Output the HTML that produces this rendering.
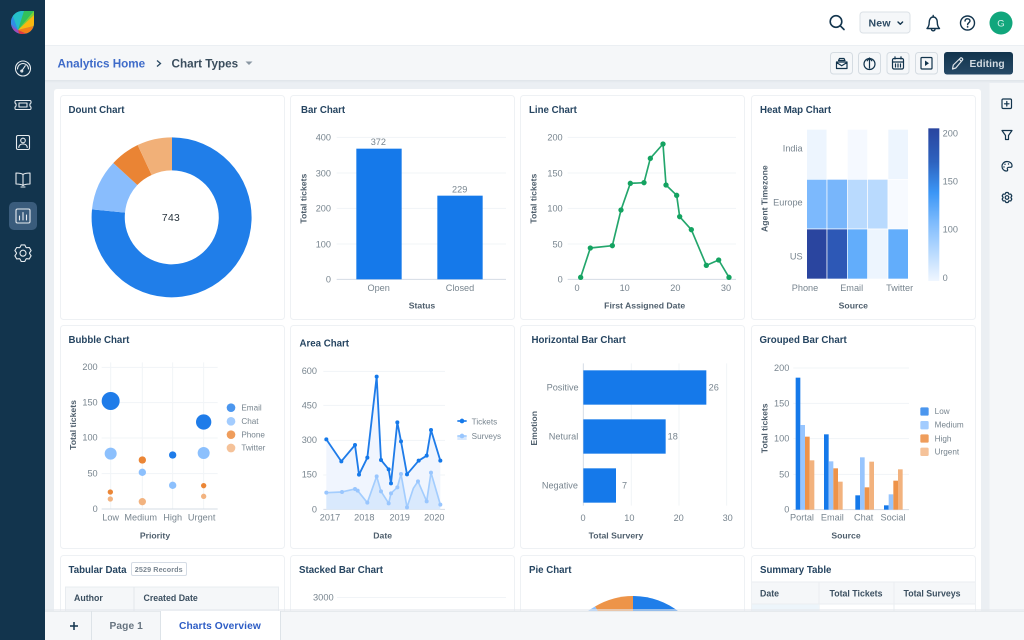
<!DOCTYPE html>
<html><head><meta charset="utf-8"><title>Analytics</title>
<style>
html,body{margin:0;padding:0;width:1024px;height:640px;overflow:hidden;background:#fff}
svg{display:block;filter:blur(.3px)}
text{font-family:"Liberation Sans",sans-serif}
.h{font-size:9.700px;font-weight:700;fill:#264561}
.t{font-size:27.500px;fill:#78858f}
.c{font-size:24.500px}
.l{font-size:26px;font-weight:700;fill:#4f5f6d}
.m{text-anchor:middle}.e{text-anchor:end}
.g{stroke:#f1f4f7;stroke-width:3;fill:none}
.a{stroke:#d5dce5;stroke-width:3;fill:none}
.w{fill:none;stroke:#e6ebef;stroke-width:1.1;stroke-linecap:round;stroke-linejoin:round}
.k{fill:none;stroke:#12344d;stroke-width:1.4;stroke-linecap:round;stroke-linejoin:round}
</style></head><body>
<svg width="1024" height="640" viewBox="0 0 1024 640" xmlns="http://www.w3.org/2000/svg">
<defs>
<path id="gear" d="M-1.77-8.3 1.77-8.3 3.05-5.74 3.44-5.51 6.32-5.69 8.08-2.63 6.5-.23 6.5.23 8.08 2.63 6.32 5.69 3.44 5.51 3.05 5.74 1.77 8.3-1.77 8.3-3.05 5.74-3.44 5.51-6.32 5.69-8.08 2.63-6.5.23-6.5-.23-8.08-2.63-6.32-5.69-3.44-5.51-3.05-5.74Z"/>
<clipPath id="leaf"><path d="M22.5 11H34V23C34 29.5 29 34 22.5 34C16 34 11 29 11 22.5C11 16 16 11 22.5 11Z"/></clipPath>
<linearGradient id="cb" x1="0" y1="0" x2="0" y2="1"><stop offset="0" stop-color="#2a459f"/><stop offset=".22" stop-color="#2e63bf"/><stop offset=".42" stop-color="#3b96f6"/><stop offset=".62" stop-color="#7fbcfd"/><stop offset="1" stop-color="#f0f7ff"/></linearGradient>
<linearGradient id="ed" x1="0" y1="0" x2="0" y2="1"><stop offset="0" stop-color="#12344d"/><stop offset="1" stop-color="#264966"/></linearGradient>
<linearGradient id="sh" x1="0" y1="0" x2="0" y2="1"><stop offset="0" stop-color="#dfe4e9"/><stop offset="1" stop-color="#ebeff3"/></linearGradient>
</defs>

<!-- backgrounds -->
<rect width="1024" height="640" fill="#ebeff3"/>
<rect x="45" y="0" width="979" height="45" fill="#fff"/>
<rect x="54" y="89" width="927" height="530" rx="3" fill="#fff"/>
<rect x="989.500" y="81" width="35" height="530" fill="#f5f7f9"/>
<rect x="45" y="45" width="979" height="35" fill="#f5f7f9"/>
<rect x="45" y="45" width="979" height="1" fill="#ebeff3"/>
<rect x="45" y="80" width="979" height="3" fill="url(#sh)"/>

<!-- cards -->
<g fill="#fff" stroke="#eef1f4">
<rect x="60.500" y="95.500" width="224" height="224" rx="3"/>
<rect x="290.500" y="95.500" width="224" height="224" rx="3"/>
<rect x="520.500" y="95.500" width="224" height="224" rx="3"/>
<rect x="751.500" y="95.500" width="224" height="224" rx="3"/>
<rect x="60.500" y="325.500" width="224" height="223" rx="3"/>
<rect x="290.500" y="325.500" width="224" height="223" rx="3"/>
<rect x="520.500" y="325.500" width="224" height="223" rx="3"/>
<rect x="751.500" y="325.500" width="224" height="223" rx="3"/>
<rect x="60.500" y="555.500" width="224" height="100" rx="3"/>
<rect x="290.500" y="555.500" width="224" height="100" rx="3"/>
<rect x="520.500" y="555.500" width="224" height="100" rx="3"/>
<rect x="751.500" y="555.500" width="224" height="100" rx="3"/>
</g>

<text class="h" x="68.500" y="113">Dount Chart</text>
<text class="h" x="301" y="113">Bar Chart</text>
<text class="h" x="529" y="113">Line Chart</text>
<text class="h" x="760" y="113">Heat Map Chart</text>
<text class="h" x="68.500" y="343">Bubble Chart</text>
<text class="h" x="299.500" y="346.500">Area Chart</text>
<text class="h" x="531.500" y="343">Horizontal Bar Chart</text>
<text class="h" x="759.500" y="343">Grouped Bar Chart</text>
<text class="h" x="68.500" y="573">Tabular Data</text>
<text class="h" x="299" y="573">Stacked Bar Chart</text>
<text class="h" x="529" y="573">Pie Chart</text>
<text class="h" x="760" y="573">Summary Table</text>

<!-- donut -->
<g transform="translate(60,95) scale(.33333)">
<path d="M336 127A240 240 0 1 1 96 343L195 353A141 141 0 1 0 336 226Z" fill="#207ee9"/>
<path d="M96 343A240 240 0 0 1 160 204L232 270A141 141 0 0 0 195 353Z" fill="#89bdfd"/>
<path d="M160 204A240 240 0 0 1 233 150L275 240A141 141 0 0 0 232 270Z" fill="#ea8434"/>
<path d="M233 150A240 240 0 0 1 336 127L336 226A141 141 0 0 0 275 240Z" fill="#f1b078"/>
<text x="333" y="378" class="m" style="font-size:31px;fill:#27333d;letter-spacing:1px">743</text>
</g>

<!-- bar -->
<g transform="translate(290,90) scale(.33333)">
<path class="g" d="M140 142H648M140 249H648M140 355H648M140 462H648"/>
<path class="a" d="M140 568H648"/>
<rect x="199" y="176" width="136" height="392" fill="#1579ea"/>
<rect x="442" y="317" width="136" height="251" fill="#1579ea"/>
<g class="t"><text x="123" y="152" class="e">400</text><text x="123" y="259" class="e">300</text><text x="123" y="365" class="e">200</text><text x="123" y="472" class="e">100</text><text x="123" y="578" class="e">0</text>
<text x="265" y="165" class="m">372</text><text x="509" y="307" class="m">229</text>
<text x="266" y="603" class="m">Open</text><text x="510" y="603" class="m">Closed</text></g>
<text class="l m" x="396" y="656">Status</text>
<text class="l m" transform="translate(50,326) rotate(-90)">Total tickets</text>
</g>

<!-- line -->
<g transform="translate(520,90) scale(.33333)">
<path class="g" d="M143 142H648M143 249H648M143 355H648M143 462H648"/>
<path class="a" d="M143 568H648"/>
<g class="t"><text x="128" y="152" class="e">200</text><text x="128" y="259" class="e">150</text><text x="128" y="365" class="e">100</text><text x="128" y="472" class="e">50</text><text x="128" y="578" class="e">0</text>
<text x="171" y="603" class="m">0</text><text x="314" y="603" class="m">10</text><text x="466" y="603" class="m">20</text><text x="618" y="603" class="m">30</text></g>
<polyline fill="none" stroke="#23a66c" stroke-width="5" stroke-linejoin="round" points="182,562 211,474 277,467 303,360 331,280 372,278 391,205 429,162 438,285 470,316 479,380 514,419 559,526 596,510 627,562"/>
<g fill="#14a361"><circle cx="182" cy="562" r="8"/><circle cx="211" cy="474" r="8"/><circle cx="277" cy="467" r="8"/><circle cx="303" cy="360" r="8"/><circle cx="331" cy="280" r="8"/><circle cx="372" cy="278" r="8"/><circle cx="391" cy="205" r="8"/><circle cx="429" cy="162" r="8"/><circle cx="438" cy="285" r="8"/><circle cx="470" cy="316" r="8"/><circle cx="479" cy="380" r="8"/><circle cx="514" cy="419" r="8"/><circle cx="559" cy="526" r="8"/><circle cx="596" cy="510" r="8"/><circle cx="627" cy="562" r="8"/></g>
<text class="l m" x="374" y="656">First Assigned Date</text>
<text class="l m" transform="translate(50,326) rotate(-90)">Total tickets</text>
</g>

<!-- heat -->
<g transform="translate(750,95) scale(.33333)">
<g stroke="#fff" stroke-width="2">
<rect x="170" y="103" width="61" height="150" fill="#edf5fe"/><rect x="231" y="103" width="61" height="150" fill="#fff"/><rect x="292" y="103" width="61" height="150" fill="#f5f9ff"/><rect x="353" y="103" width="61" height="150" fill="#fff"/><rect x="414" y="103" width="61" height="150" fill="#edf5fe"/>
<rect x="170" y="253" width="61" height="149" fill="#7cb9fd"/><rect x="231" y="253" width="61" height="149" fill="#78b6fb"/><rect x="292" y="253" width="61" height="149" fill="#b9dafe"/><rect x="353" y="253" width="61" height="149" fill="#b9dafe"/><rect x="414" y="253" width="61" height="149" fill="#f7faff"/>
<rect x="170" y="402" width="61" height="150" fill="#2a459f"/><rect x="231" y="402" width="61" height="150" fill="#2d58b6"/><rect x="292" y="402" width="61" height="150" fill="#62adfb"/><rect x="353" y="402" width="61" height="150" fill="#edf5fe"/><rect x="414" y="402" width="61" height="150" fill="#62adfb"/>
</g>
<rect x="535" y="100" width="33" height="458" fill="url(#cb)"/>
<g class="t"><text x="158" y="169" class="e">India</text><text x="158" y="332" class="e">Europe</text><text x="158" y="493" class="e">US</text>
<text x="578" y="125">200</text><text x="578" y="269">150</text><text x="578" y="413">100</text><text x="578" y="558">0</text>
<text x="165" y="588" class="m">Phone</text><text x="305" y="588" class="m">Email</text><text x="449" y="588" class="m">Twitter</text></g>
<text class="l m" x="310" y="641">Source</text>
<text class="l m" transform="translate(52,311) rotate(-90)">Agent Timezone</text>
</g>

<!-- bubble -->
<g transform="translate(60,325) scale(.33333)">
<path class="g" d="M125 127H473M125 233H473M125 339H473M125 446H473M152 112V552M247 112V552M338 112V552M431 112V552"/>
<path class="a" d="M125 552H473"/>
<g class="t"><text x="113" y="135" class="e">200</text><text x="113" y="241" class="e">150</text><text x="113" y="347" class="e">100</text><text x="113" y="455" class="e">50</text><text x="113" y="561" class="e">0</text>
<text x="152" y="587" class="m">Low</text><text x="242" y="587" class="m">Medium</text><text x="338" y="587" class="m">High</text><text x="425" y="587" class="m">Urgent</text>
<text x="544" y="256" class="c">Email</text><text x="544" y="297" class="c">Chat</text><text x="544" y="337" class="c">Phone</text><text x="544" y="377" class="c">Twitter</text></g>
<g fill="#1f7ce9"><circle cx="152" cy="228" r="27"/><circle cx="431" cy="291" r="23"/><circle cx="338" cy="390" r="11"/></g>
<g fill="#8cc0fd"><circle cx="152" cy="386" r="18"/><circle cx="247" cy="442" r="11"/><circle cx="338" cy="481" r="11"/><circle cx="431" cy="384" r="18"/></g>
<g fill="#eb8636"><circle cx="151" cy="501" r="8"/><circle cx="247" cy="405" r="11"/><circle cx="431" cy="482" r="8"/></g>
<g fill="#f2b380"><circle cx="151" cy="522" r="8"/><circle cx="247" cy="530" r="11"/><circle cx="431" cy="514" r="8"/></g>
<circle cx="513" cy="248" r="13" fill="#4b96ee"/><circle cx="513" cy="289" r="13" fill="#a3ccfe"/><circle cx="513" cy="329" r="13" fill="#ef9d5c"/><circle cx="513" cy="369" r="13" fill="#f5c299"/>
<text class="l m" x="285" y="640">Priority</text>
<text class="l m" transform="translate(48,300) rotate(-90)">Total tickets</text>
</g>

<!-- area -->
<g transform="translate(290,325) scale(.33333)">
<path class="g" d="M100 139H465M100 241H465M100 346H465M100 450H465"/>
<path class="a" d="M100 553H465"/>
<g class="t"><text x="81" y="147" class="e">600</text><text x="81" y="250" class="e">450</text><text x="81" y="354" class="e">300</text><text x="81" y="458" class="e">150</text><text x="81" y="562" class="e">0</text>
<text x="120" y="587" class="m">2017</text><text x="223" y="587" class="m">2018</text><text x="329" y="587" class="m">2019</text><text x="433" y="587" class="m">2020</text>
<text x="545" y="299" class="c">Tickets</text><text x="545" y="342" class="c">Surveys</text></g>
<polygon fill="#f0f5fe" points="109,343 154,409 195,360 207,449 232,398 260,155 273,405 296,433 303,475 322,292 333,349 351,448 386,407 410,392 423,315 451,407 451,553 109,553"/>
<polygon fill="#d9e9fd" points="109,503 156,501 195,492 203,497 232,533 260,454 273,499 296,535 303,505 322,487 333,447 351,547 370,490 384,469 410,529 423,443 451,539 451,553 109,553"/>
<polyline fill="none" stroke="#a3cdfe" stroke-width="5" stroke-linejoin="round" points="109,503 156,501 195,492 203,497 232,533 260,454 273,499 296,535 303,505 322,487 333,447 351,547 370,490 384,469 410,529 423,443 451,539"/>
<g fill="#99c6fe"><circle cx="109" cy="503" r="6"/><circle cx="156" cy="501" r="6"/><circle cx="195" cy="492" r="6"/><circle cx="203" cy="497" r="6"/><circle cx="232" cy="533" r="6"/><circle cx="260" cy="454" r="6"/><circle cx="273" cy="499" r="6"/><circle cx="296" cy="535" r="6"/><circle cx="303" cy="505" r="6"/><circle cx="322" cy="487" r="6"/><circle cx="333" cy="447" r="6"/><circle cx="351" cy="547" r="6"/><circle cx="384" cy="469" r="6"/><circle cx="410" cy="529" r="6"/><circle cx="423" cy="443" r="6"/><circle cx="451" cy="539" r="6"/></g>
<polyline fill="none" stroke="#1f7ce9" stroke-width="5.500" stroke-linejoin="round" points="109,343 154,409 195,360 207,449 232,398 260,155 273,405 296,433 303,475 322,292 333,349 351,448 386,407 410,392 423,315 451,407"/>
<g fill="#1579ea"><circle cx="109" cy="343" r="6"/><circle cx="154" cy="409" r="6"/><circle cx="195" cy="360" r="6"/><circle cx="207" cy="449" r="6"/><circle cx="232" cy="398" r="6"/><circle cx="260" cy="155" r="6"/><circle cx="273" cy="405" r="6"/><circle cx="296" cy="433" r="6"/><circle cx="303" cy="475" r="6"/><circle cx="322" cy="292" r="6"/><circle cx="333" cy="349" r="6"/><circle cx="351" cy="448" r="6"/><circle cx="386" cy="407" r="6"/><circle cx="410" cy="392" r="6"/><circle cx="423" cy="315" r="6"/><circle cx="451" cy="407" r="6"/></g>
<path d="M502 288H530" stroke="#1f7ce9" stroke-width="5"/><circle cx="516" cy="288" r="7" fill="#1579ea"/>
<rect x="502" y="333" width="28" height="12" fill="#d9e9fd"/><path d="M502 333H530" stroke="#a3cdfe" stroke-width="5"/><circle cx="516" cy="333" r="7" fill="#99c6fe"/>
<text class="l m" x="278" y="640">Date</text>
</g>

<!-- horizontal -->
<g transform="translate(520,325) scale(.33333)">
<path class="g" d="M334 115V542M477 115V542M620 115V542"/>
<path class="a" d="M190 115V542"/>
<g fill="#1579ea"><rect x="190" y="136" width="369" height="103"/><rect x="190" y="283" width="247" height="103"/><rect x="190" y="430" width="98" height="103"/></g>
<g class="t"><text x="176" y="197" class="e">Positive</text><text x="175" y="344" class="e">Netural</text><text x="174" y="491" class="e">Negative</text>
<text x="566" y="197">26</text><text x="443" y="344">18</text><text x="306" y="491">7</text>
<text x="189" y="588" class="m">0</text><text x="328" y="588" class="m">10</text><text x="476" y="588" class="m">20</text><text x="623" y="588" class="m">30</text></g>
<text class="l m" x="288" y="640">Total Survery</text>
<text class="l m" transform="translate(51,310) rotate(-90)">Emotion</text>
</g>

<!-- grouped -->
<g transform="translate(750,325) scale(.33333)">
<path class="g" d="M130 129H477M130 235H477M130 341H477M130 448H477"/>
<path class="a" d="M130 554H477"/>
<g class="t"><text x="118" y="138" class="e">200</text><text x="118" y="244" class="e">150</text><text x="118" y="350" class="e">100</text><text x="118" y="457" class="e">50</text><text x="118" y="563" class="e">0</text>
<text x="156" y="587" class="m">Portal</text><text x="247" y="587" class="m">Email</text><text x="341" y="587" class="m">Chat</text><text x="429" y="587" class="m">Social</text>
<text x="554" y="267" class="c">Low</text><text x="554" y="308" class="c">Medium</text><text x="554" y="349" class="c">High</text><text x="554" y="389" class="c">Urgent</text></g>
<g fill="#1579ea"><rect x="137" y="158" width="14" height="396"/><rect x="222" y="328" width="14" height="226"/><rect x="316" y="511" width="14" height="43"/><rect x="402" y="541" width="14" height="13"/></g>
<g fill="#97c5fe"><rect x="151" y="300" width="14" height="254"/><rect x="236" y="409" width="14" height="145"/><rect x="330" y="397" width="14" height="157"/><rect x="416" y="508" width="14" height="46"/></g>
<g fill="#ee9349"><rect x="165" y="335" width="14" height="219"/><rect x="250" y="430" width="14" height="124"/><rect x="344" y="487" width="14" height="67"/><rect x="430" y="467" width="14" height="87"/></g>
<g fill="#f2b27e"><rect x="179" y="406" width="14" height="148"/><rect x="264" y="470" width="14" height="84"/><rect x="358" y="410" width="14" height="144"/><rect x="444" y="433" width="14" height="121"/></g>
<rect x="511" y="247" width="25" height="25" rx="4" fill="#4b96ee"/><rect x="511" y="288" width="25" height="25" rx="4" fill="#a3ccfe"/><rect x="511" y="328" width="25" height="25" rx="4" fill="#ef9d5c"/><rect x="511" y="368" width="25" height="25" rx="4" fill="#f5c299"/>
<text class="l m" x="288" y="640">Source</text>
<text class="l m" transform="translate(52,310) rotate(-90)">Total tickets</text>
</g>

<!-- tabular -->
<rect x="131.500" y="562.500" width="55" height="13" rx="1.500" fill="#fff" stroke="#d5dce5"/>
<text x="134.800" y="572" style="font-size:7.200px;fill:#7b8792;font-weight:700;letter-spacing:.1px">2529 Records</text>
<rect x="65.500" y="587" width="213" height="30" fill="#f5f7f9" stroke="#e8ecf0"/>
<path d="M134 587V617" stroke="#e2e7ec"/>
<text x="74" y="601" style="font-size:8.800px;font-weight:700;fill:#3b4f60">Author</text>
<text x="143.500" y="601" style="font-size:8.800px;font-weight:700;fill:#3b4f60">Created Date</text>

<!-- stacked -->
<text x="313" y="600.500" style="font-size:9.300px;fill:#78858f">3000</text>
<path d="M337 597.500H506" stroke="#f1f4f7"/>

<!-- pie -->
<path d="M633 671V596A75 75 0 0 1 680 612.500Z" fill="#207ee9"/>
<path d="M633 671V596A75 75 0 0 0 595 606.500Z" fill="#ed9449"/>
<path d="M633 671L595 606.500A75 75 0 0 0 586 612.500Z" fill="#8fc1fd"/>

<!-- summary -->
<rect x="752" y="582" width="223" height="22" fill="#f5f7f9"/>
<path d="M752 582H975M752 604H975M819 582V620M894 582V620" stroke="#eaeef1"/>
<rect x="752" y="604.500" width="67" height="10" fill="#edf5fb"/>
<g style="font-size:8.800px;font-weight:700;fill:#3b4f60"><text x="760" y="596.500">Date</text><text x="829.500" y="596.500">Total Tickets</text><text x="903.500" y="596.500">Total Surveys</text></g>

<!-- tabs bar -->
<rect x="45" y="609" width="979" height="2" fill="#e4e8ec" opacity=".6"/>
<rect x="45" y="611" width="979" height="29" fill="#f5f7f9"/>
<path d="M45 611.500H1024" stroke="#e6eaed"/>
<rect x="161" y="611" width="119.500" height="29" fill="#fff"/>
<path d="M91.500 611V640M160.500 611V640M280.500 611V640" stroke="#dde3e8"/>
<path d="M70 626H78M74 622V630" stroke="#12344d" stroke-width="1.500"/>
<text x="109.500" y="629" style="font-size:10.200px;font-weight:700;fill:#66737f;letter-spacing:.1px">Page 1</text>
<text x="179" y="629" style="font-size:10.200px;font-weight:700;fill:#2c5cc5;letter-spacing:.1px">Charts Overview</text>

<!-- sidebar -->
<rect x="0" y="0" width="45" height="640" fill="#12344d"/>
<g clip-path="url(#leaf)">
<rect x="11" y="11" width="23" height="23" fill="#2aa7e0"/>
<polygon points="18,30 11,11 11,24" fill="#2f8fe6"/>
<polygon points="18,30 11,11 24,11" fill="#25bfc9"/>
<polygon points="18,30 24,11 34,11" fill="#32c05a"/>
<polygon points="18,30 34,11 34,15" fill="#7fd12f"/>
<polygon points="18,30 34,15 34,26" fill="#f9b80f"/>
<polygon points="18,30 34,26 34,34 27,34" fill="#f57f17"/>
<polygon points="18,30 27,34 19,34" fill="#e5393b"/>
<polygon points="18,30 19,34 11,34 11,27" fill="#a24ab8"/>
<polygon points="18,30 11,27 11,24" fill="#6d63d5"/>
</g>
<rect x="9" y="202" width="28" height="28" rx="5" fill="#3a5c7c"/>
<!-- gauge -->
<g class="w"><circle cx="23" cy="68.500" r="7.500"/><path d="M17.500 69A5.500 5.500 0 0 1 28.500 69"/><path d="M21.800 70.800 25.300 65.700"/><circle cx="21.800" cy="71" r="1"/></g>
<!-- ticket -->
<path class="w" d="M16 100.500H30C31 100.500 31 101 31 102V103C29.500 103.500 29.500 106.500 31 107V108C31 109 31 109.500 30 109.500H16C15 109.500 15 109 15 108V107C16.500 106.500 16.500 103.500 15 103V102C15 101 15 100.500 16 100.500ZM19 103H27V107H19Z"/>
<!-- contact -->
<g class="w"><rect x="16.500" y="135.500" width="13" height="14" rx="1.500"/><circle cx="23" cy="140.500" r="2.300"/><path d="M18.800 147.500C19 144.800 21 144 23 144C25 144 27 144.800 27.200 147.500"/></g>
<!-- book -->
<g class="w"><path d="M23 174.500C21 173 18 173 16 173V184C18 184 21 184 23 185.500C25 184 28 184 30 184V173C28 173 25 173 23 174.500ZM23 174.500V185.500M21 187H25"/></g>
<!-- reports -->
<g class="w"><rect x="16" y="209" width="14" height="14" rx="1.500"/><path d="M19.500 220V216M23 220V212.500M26.500 220V215"/></g>
<!-- gear -->
<use href="#gear" transform="translate(23,253.200)" class="w"/>
<circle cx="23" cy="253.200" r="3" class="w"/>

<!-- top header -->
<g class="k" style="stroke-width:1.600"><circle cx="836" cy="21.500" r="5.800"/><path d="M840.300 25.800 844 29.500"/></g>
<rect x="860" y="12" width="50" height="21" rx="3" fill="#f5f7f9" stroke="#dbe1e6"/>
<text x="868.500" y="26.500" style="font-size:10.500px;font-weight:700;fill:#2b4a63;letter-spacing:.2px">New</text>
<path class="k" d="M898 22 900.300 24.300 902.600 22"/>
<g class="k"><path d="M927 28.500H939.500C938 27 937.300 25.500 937.300 22.500C937.300 19 935.500 17 933.200 17C931 17 929.200 19 929.200 22.500C929.200 25.500 928.500 27 927 28.500ZM933.200 17V15.500M931.500 29.500C932 31.300 934.500 31.300 935 29.500"/></g>
<g class="k"><circle cx="967.500" cy="23" r="7"/><path d="M965 21C965.200 19.300 966.300 18.800 967.500 18.800C969 18.800 970 19.800 970 21C970 22.600 967.600 22.800 967.600 24.700"/></g>
<circle cx="967.600" cy="26.900" r=".9" fill="#12344d"/>
<circle cx="1001" cy="23" r="11.500" fill="#11a67c"/>
<text x="1001" y="26.500" text-anchor="middle" style="font-size:9.500px;fill:#d8f3ea">G</text>

<!-- breadcrumb -->
<text x="57.500" y="67.500" style="font-size:11.700px;font-weight:700;fill:#3e6bc9">Analytics Home</text>
<path d="M157 60.500 160.500 63.500 157 66.500" fill="none" stroke="#2b4a63" stroke-width="1.300"/>
<text x="171.500" y="67.500" style="font-size:11.700px;font-weight:700;fill:#3a4d5d">Chart Types</text>
<path d="M245.500 61.500H252.500L249 65Z" fill="#8a97a3"/>

<!-- toolbar buttons -->
<g fill="#f5f7f9" stroke="#d5dce2"><rect x="830.500" y="52.500" width="22" height="21.500" rx="3"/><rect x="858.500" y="52.500" width="22" height="21.500" rx="3"/><rect x="887" y="52.500" width="22" height="21.500" rx="3"/><rect x="915.500" y="52.500" width="22" height="21.500" rx="3"/></g>
<g class="k" style="stroke-width:1.200">
<path d="M836.500 62H847V68.500H836.500ZM836.500 62.500 841.700 65.800 847 62.500M838.500 60.500 839.500 58.500H844L845 60.500Z"/>
<circle cx="869.500" cy="64" r="5.500"/><path d="M869.500 68V59M867.200 60.800 869.500 58 871.800 60.800"/>
<rect x="892.500" y="58.500" width="11" height="10.500" rx="1.500"/><path d="M892.500 62H903.500M895 56.800V59M901 56.800V59M895.500 64V67M898 64V67M900.500 64V67"/>
<rect x="921" y="57.500" width="11" height="11.500" rx="1"/></g>
<path d="M925 60.500 929 63.300 925 66Z" fill="#12344d"/>
<rect x="944" y="52" width="69" height="22.500" rx="3" fill="url(#ed)"/>
<path d="M952.500 69 953.300 65 960.500 58C961.500 57.200 963.300 59 962.500 60L955.800 68ZM959.500 59.500 961.500 61.500" fill="none" stroke="#dfe5ea" stroke-width="1.200" stroke-linejoin="round"/>
<text x="969.500" y="67.200" style="font-size:10.200px;font-weight:700;fill:#d3dbe2;letter-spacing:.1px">Editing</text>

<!-- right rail -->
<g class="k" style="stroke-width:1.200">
<rect x="1002" y="99" width="9.500" height="9.500" rx="1.200"/><path d="M1006.800 101.500V106M1004.500 103.800H1009"/>
<path d="M1002 130.500H1012L1008.500 135.500V139.500H1005.500V135.500Z"/>
<path d="M1007 161.500C1003.800 161.500 1002 164 1002 166.300C1002 169 1004 171 1006.500 171C1008 171 1007.800 169.500 1007.300 168.800C1007 168 1007.800 167.300 1008.800 167.300H1010.500C1011.500 167.300 1012 166.500 1012 165.700C1012 163.300 1010 161.500 1007 161.500Z"/>
<circle cx="1007" cy="197.500" r="1.800"/></g>
<g fill="#12344d"><circle cx="1005" cy="164.300" r=".7"/><circle cx="1008.500" cy="164" r=".7"/><circle cx="1004" cy="167" r=".7"/></g>
<use href="#gear" transform="translate(1007,197.500) scale(.6)" fill="none" stroke="#12344d" stroke-width="2" stroke-linejoin="round"/>
</svg>
</body></html>
